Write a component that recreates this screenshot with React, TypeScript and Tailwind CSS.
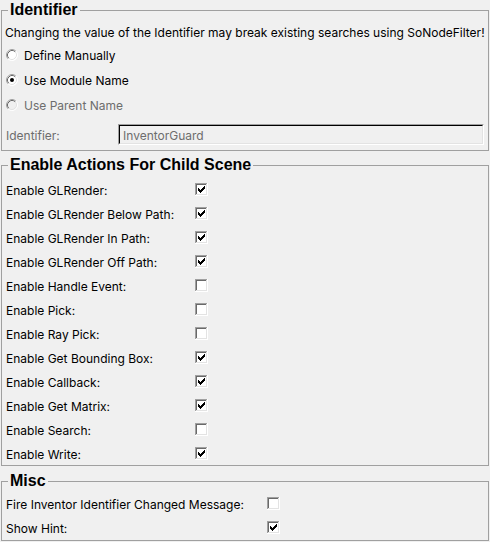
import React from "react";

function Radio({ checked, disabled }: { checked?: boolean; disabled?: boolean }) {
  return (
    <svg width="12" height="12" viewBox="0 0 12 12" className="shrink-0">
      <circle cx="6" cy="6" r="5.5" fill={disabled ? "#f0f0f0" : "#ffffff"} />
      <path d="M9.89 2.11 A5.5 5.5 0 0 0 2.11 9.89" fill="none" stroke="#a0a0a0" strokeWidth="1" />
      <path d="M2.11 9.89 A5.5 5.5 0 0 0 9.89 2.11" fill="none" stroke="#ffffff" strokeWidth="1" />
      <path d="M9.18 2.82 A4.5 4.5 0 0 0 2.82 9.18" fill="none" stroke="#696969" strokeWidth="1" />
      <path d="M2.82 9.18 A4.5 4.5 0 0 0 9.18 2.82" fill="none" stroke="#e3e3e3" strokeWidth="1" />
      {checked && <circle cx="6" cy="6" r="2" fill="#000000" />}
    </svg>
  );
}

function Check({ checked }: { checked?: boolean }) {
  const cols: [number, number][] = [
    [3, 5], [4, 6], [5, 7], [6, 6], [7, 5], [8, 4], [9, 3],
  ];
  return (
    <svg width="13" height="13" viewBox="0 0 13 13" className="shrink-0" shapeRendering="crispEdges">
      <rect x="0" y="0" width="13" height="13" fill="#ffffff" />
      <rect x="0" y="0" width="12" height="1" fill="#a0a0a0" />
      <rect x="0" y="0" width="1" height="12" fill="#a0a0a0" />
      <rect x="1" y="1" width="10" height="1" fill="#696969" />
      <rect x="1" y="1" width="1" height="10" fill="#696969" />
      <rect x="1" y="11" width="11" height="1" fill="#e3e3e3" />
      <rect x="11" y="1" width="1" height="11" fill="#e3e3e3" />
      {checked && cols.map(([x, y]) => <rect key={x} x={x} y={y} width="1" height="3" fill="#000000" />)}
    </svg>
  );
}

function Legend({ children }: { children: React.ReactNode }) {
  return (
    <legend className="ml-[6px] px-[2px] font-['Liberation_Sans'] font-bold text-[16px] leading-[20px] text-black">
      {children}
    </legend>
  );
}

const actions: [string, boolean][] = [
  ["Enable GLRender:", true],
  ["Enable GLRender Below Path:", true],
  ["Enable GLRender In Path:", true],
  ["Enable GLRender Off Path:", true],
  ["Enable Handle Event:", false],
  ["Enable Pick:", false],
  ["Enable Ray Pick:", false],
  ["Enable Get Bounding Box:", true],
  ["Enable Callback:", true],
  ["Enable Get Matrix:", true],
  ["Enable Search:", false],
  ["Enable Write:", true],
];

export default function App() {
  return (
    <div className="w-[490px] h-[542px] bg-[#f0f0f0] px-[1px] font-['Inter'] text-[12px] text-black">
      <fieldset className="border border-[#a0a0a0] pb-[5px]">
        <Legend>Identifier</Legend>
        <div className="h-[22px] flex items-center pl-[3px] pt-[3px] whitespace-nowrap">
          Changing the value of the Identifier may break existing searches using SoNodeFilter!
        </div>
        <div className="h-[25px] flex items-center pl-[4px] gap-[6px]">
          <Radio />
          <span className="pt-[3px]">Define Manually</span>
        </div>
        <div className="h-[25px] flex items-center pl-[4px] gap-[6px]">
          <Radio checked />
          <span className="pt-[3px]">Use Module Name</span>
        </div>
        <div className="h-[25px] flex items-center pl-[4px] gap-[6px] text-[#6d6d6d]">
          <Radio disabled />
          <span className="pt-[3px]">Use Parent Name</span>
        </div>
        <div className="mt-[7px] h-[21px] flex items-center pl-[4px] pr-[4px]">
          <span className="w-[112px] pt-[3px] text-[#6d6d6d]">Identifier:</span>
          <div className="flex-1 h-[21px] border-t border-l border-[#a0a0a0] border-b-white border-r-white border-b border-r">
            <div className="h-full border-t border-l border-t-black border-l-black border-b border-r border-b-[#e3e3e3] border-r-[#e3e3e3] flex items-center pl-[3px] pt-[2px] text-[#6d6d6d]">
              InventorGuard
            </div>
          </div>
        </div>
      </fieldset>

      <fieldset className="mt-[4px] border border-[#a0a0a0] pt-[2px]">
        <Legend>Enable Actions For Child Scene</Legend>
        {actions.map(([label, on]) => (
          <div key={label} className="h-[24px] flex items-center pl-[4px]">
            <span className="w-[189px] pt-[3px]">{label}</span>
            <Check checked={on} />
          </div>
        ))}
      </fieldset>

      <fieldset className="mt-[5px] border border-[#a0a0a0] pb-[1px]">
        <Legend>Misc</Legend>
        <div className="h-[24px] flex items-center pl-[4px]">
          <span className="w-[261px] pt-[3px]">Fire Inventor Identifier Changed Message:</span>
          <Check />
        </div>
        <div className="h-[24px] flex items-center pl-[4px]">
          <span className="w-[261px] pt-[3px]">Show Hint:</span>
          <Check checked />
        </div>
      </fieldset>
    </div>
  );
}
